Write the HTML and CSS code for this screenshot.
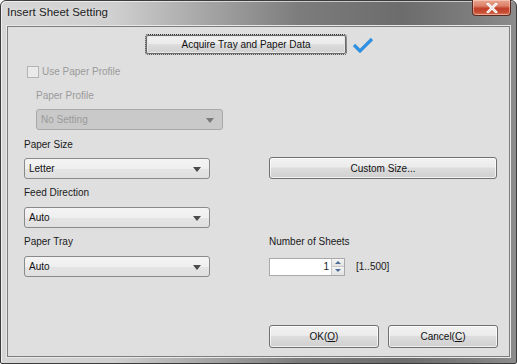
FILE: index.html
```html
<!DOCTYPE html>
<html>
<head>
<meta charset="utf-8">
<link rel="stylesheet" href="styles.css">
</head>
<body>
<div class="window">
  <div class="titlebar">
    <span class="title">Insert Sheet Setting</span>
    <div class="close"><svg width="14" height="10" viewBox="0 0 14 10"><path d="M3 1 L11 9 M11 1 L3 9" stroke="#fff" stroke-width="2.6" stroke-linecap="square"/><path d="M3 1 L11 9 M11 1 L3 9" stroke="#7a2a1a" stroke-width="0.6" opacity="0.3"/></svg></div>
  </div>
  <div class="client">
    <div class="row-acquire">
      <button class="btn btn-acquire">Acquire Tray and Paper Data</button>
      <svg class="check" width="22" height="16" viewBox="0 0 22 16"><path d="M2 8 L8 14 L20 2" fill="none" stroke="#2f8fe0" stroke-width="3.2" stroke-linejoin="miter"/></svg>
    </div>
    <div class="cb-row disabled">
      <span class="cb"></span><span>Use Paper Profile</span>
    </div>
    <div class="label indent disabled lbl-profile">Paper Profile</div>
    <div class="select select-disabled indent sel-profile"><span>No Setting</span><span class="arrow"></span></div>
    <div class="label lbl-size">Paper Size</div>
    <div class="pair size-row">
      <div class="select"><span>Letter</span><span class="arrow"></span></div>
      <button class="btn btn-custom">Custom Size...</button>
    </div>
    <div class="label lbl-feed">Feed Direction</div>
    <div class="select sel-feed"><span>Auto</span><span class="arrow"></span></div>
    <div class="pair labels-row">
      <div class="label">Paper Tray</div>
      <div class="label">Number of Sheets</div>
    </div>
    <div class="pair tray-row">
      <div class="select"><span>Auto</span><span class="arrow"></span></div>
      <div class="sheets">
        <div class="spin-input">
          <span class="val">1</span>
          <div class="spinner">
            <span class="sp up"></span>
            <span class="sp down"></span>
          </div>
        </div>
        <span class="range">[1..500]</span>
      </div>
    </div>
    <div class="footer">
      <button class="btn btn-ok">OK(<u>O</u>)</button>
      <button class="btn btn-cancel">Cancel(<u>C</u>)</button>
    </div>
  </div>
</div>
</body>
</html>
```
FILE: styles.css
```css
html, body {
  margin: 0;
  padding: 0;
  width: 517px;
  height: 364px;
  overflow: hidden;
  background: #ffffff;
}
.window {
  box-sizing: border-box;
  width: 517px;
  height: 364px;
  border: 1px solid #3c3c3c;
  border-radius: 6px 6px 2px 2px;
  background: linear-gradient(to right, #d6d6d6 0%, #cfcfcf 22%, #a5a5a5 40%, #7c7c7c 58%, #6c6c6c 78%, #7e7e7e 92%, #8c8c8c 100%);
  display: flex;
  flex-direction: column;
  font-family: "Liberation Sans", Arial, sans-serif;
  font-size: 10px;
  color: #1a1a1a;
  box-shadow: inset 1px 1px 0 rgba(255,255,255,0.6);
}
.titlebar {
  height: 25px;
  display: flex;
  align-items: flex-start;
  justify-content: space-between;
  padding: 0 5px 0 6px;
}
.title {
  font-size: 11.5px;
  color: #222;
  margin-top: 5px;
  text-shadow: 0 0 6px rgba(255,255,255,0.8);
}
.close {
  width: 39px;
  height: 16px;
  margin-top: -1px;
  box-sizing: border-box;
  border: 1px solid #5a2a20;
  border-top: none;
  border-radius: 0 0 4px 4px;
  background: linear-gradient(to bottom, #e9a791 0%, #dc8068 40%, #c2412a 55%, #c64a30 80%, #d8785c 100%);
  display: flex;
  align-items: center;
  justify-content: center;
  box-shadow: inset 0 0 0 1px rgba(255,220,210,0.5);
}
.client {
  flex: 1;
  margin: 0 6px 6px 6px;
  border: 1px solid #7d7d7d;
  box-shadow: 0 0 0 1px #e8e8e8;
  background: #dfdfdf;
  padding: 7px 0 0 16px;
  display: flex;
  flex-direction: column;
  align-items: flex-start;
}
.btn {
  box-sizing: border-box;
  font-family: "Liberation Sans", Arial, sans-serif;
  font-size: 10px;
  color: #111;
  border: 1px solid #707070;
  border-radius: 3px;
  background: linear-gradient(to bottom, #f2f2f2 0%, #ebebeb 45%, #dddddd 50%, #cfcfcf 100%);
  box-shadow: inset 0 0 0 1px rgba(255,255,255,0.7);
  padding: 0;
  margin: 0;
}
.btn u { text-decoration: underline; }
.row-acquire {
  display: flex;
  align-items: center;
  padding-left: 121px;
}
.btn-acquire {
  width: 202px;
  height: 21px;
  border: 1px dotted #333;
  outline: 1px solid #6a6a6a;
  outline-offset: -2px;
  box-shadow: inset 0 0 0 2px #e6e6e6;
}
.check {
  margin-left: 5px;
  margin-top: 0;
}
.cb-row {
  display: flex;
  align-items: center;
  margin-top: 10px;
  margin-left: 3px;
  height: 14px;
  line-height: 14px;
}
.cb {
  box-sizing: border-box;
  width: 12px;
  height: 12px;
  border: 1px solid #b4b4b4;
  background: #eaeaea;
  margin-right: 3px;
}
.disabled { color: #9a9a9a; }
.label {
  height: 14px;
  line-height: 14px;
}
.indent { margin-left: 12px; }
.lbl-profile { margin-top: 10px; }
.select {
  box-sizing: border-box;
  width: 186px;
  height: 21px;
  border: 1px solid #8a8a8a;
  border-radius: 3px;
  background: linear-gradient(to bottom, #f4f4f4 0%, #efefef 50%, #e4e4e4 51%, #e0e0e0 100%);
  display: flex;
  align-items: center;
  justify-content: space-between;
  padding: 0 8px 0 4px;
  color: #111;
}
.arrow {
  width: 0;
  height: 0;
  border-left: 4px solid transparent;
  border-right: 4px solid transparent;
  border-top: 5px solid #4a4a4a;
  margin-top: 1px;
}
.select-disabled {
  background: #c9c9c9;
  border-color: #a8a8a8;
  color: #9a9a9a;
  width: 187px;
  margin-top: 6px;
}
.select-disabled .arrow { border-top-color: #7a7a7a; }
.lbl-size { margin-top: 8px; }
.pair {
  display: grid;
  grid-template-columns: 245px 228px;
  align-items: center;
}
.size-row {
  margin-top: 5px;
  height: 22px;
}
.size-row .select { margin-top: 1px; }
.btn-custom {
  width: 228px;
  height: 22px;
}
.lbl-feed { margin-top: 7px; }
.sel-feed { margin-top: 7px; }
.labels-row { margin-top: 7px; }
.tray-row { margin-top: 7px; }
.sheets {
  display: flex;
  align-items: center;
}
.spin-input {
  box-sizing: border-box;
  width: 76px;
  height: 18px;
  border: 1px solid #a9a9a9;
  background: #fff;
  display: flex;
  align-items: stretch;
  justify-content: flex-end;
}
.val {
  line-height: 16px;
  padding-right: 2px;
}
.spinner {
  width: 12px;
  display: flex;
  flex-direction: column;
  border-left: 1px solid #c8c8c8;
}
.sp {
  flex: 1;
  background: linear-gradient(to bottom, #f4f4f4, #e2e2e2);
  display: flex;
  align-items: center;
  justify-content: center;
}
.sp.up { border-bottom: 1px solid #c8c8c8; }
.sp.up::after {
  content: "";
  border-left: 3px solid transparent;
  border-right: 3px solid transparent;
  border-bottom: 3px solid #4d6c95;
}
.sp.down::after {
  content: "";
  border-left: 3px solid transparent;
  border-right: 3px solid transparent;
  border-top: 3px solid #4d6c95;
}
.range { margin-left: 11px; }
.footer {
  display: flex;
  gap: 9px;
  margin-top: 48px;
  margin-left: 245px;
}
.btn-ok, .btn-cancel {
  width: 110px;
  height: 23px;
}
```
